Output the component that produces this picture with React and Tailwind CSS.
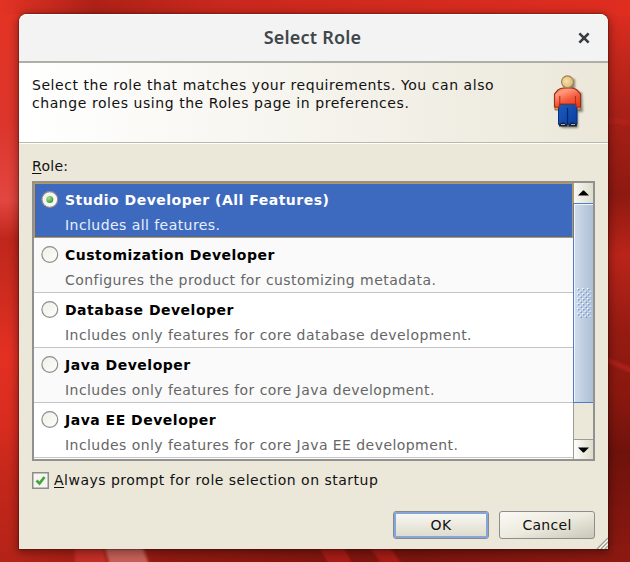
const roles = [
  { name: 'Studio Developer (All Features)', note: 'Includes all features.' },
  { name: 'Customization Developer', note: 'Configures the product for customizing metadata.' },
  { name: 'Database Developer', note: 'Includes only features for core database development.' },
  { name: 'Java Developer', note: 'Includes only features for core Java development.' },
  { name: 'Java EE Developer', note: 'Includes only features for core Java EE development.' },
];

function Radio({ checked }) {
  return (
    <svg width="18" height="18" viewBox="0 0 18 18" className="block shrink-0">
      <defs>
        <linearGradient id="radioFill" x1="0" y1="0" x2="1" y2="1">
          <stop offset="0" stopColor="#efeee6" />
          <stop offset="1" stopColor="#fefefc" />
        </linearGradient>
        <radialGradient id="radioDot" cx="0.35" cy="0.3" r="0.8">
          <stop offset="0" stopColor="#a9dc98" />
          <stop offset="1" stopColor="#2f962c" />
        </radialGradient>
      </defs>
      <circle cx="8.800" cy="8.500" r="7.900" fill="url(#radioFill)" stroke="#8c8e8c" strokeWidth="1.200" />
      {checked && <circle cx="8.800" cy="8.500" r="3.500" fill="url(#radioDot)" />}
    </svg>
  );
}

function Person() {
  return (
    <svg width="36" height="56" viewBox="0 0 36 56" className="block">
      <defs>
        <radialGradient id="head" cx="0.4" cy="0.45" r="0.7">
          <stop offset="0" stopColor="#f5e3b4" />
          <stop offset="1" stopColor="#d8ae64" />
        </radialGradient>
        <linearGradient id="shirt" x1="0.2" y1="0" x2="0.8" y2="1">
          <stop offset="0" stopColor="#ff7a58" />
          <stop offset="0.200" stopColor="#ff9a7c" />
          <stop offset="0.600" stopColor="#f4583a" />
          <stop offset="1" stopColor="#e8401e" />
        </linearGradient>
        <linearGradient id="jeans" x1="0" y1="0" x2="1" y2="1">
          <stop offset="0" stopColor="#1c5cc0" />
          <stop offset="1" stopColor="#0a3da0" />
        </linearGradient>
        <filter id="blur"><feGaussianBlur stdDeviation="1" /></filter>
      </defs>
      <path d="M15 5h10v11l7 3 1 19h-5v16H12l-2-2z" fill="#35352c" opacity="0.55" filter="url(#blur)" />
      <path d="M5 33h4v3H5z M26 33h4v3h-4z" fill="#dda15a" stroke="#9b6a35" />
      <path d="M8.500 30h18.500v20.500H8.500z" fill="url(#jeans)" stroke="#0a2f7c" />
      <path d="M17.500 34v16" stroke="#062661" strokeWidth="1.200" />
      <path d="M8 16c2-1.800 4-2 6-2h7c3 0 4 .5 6 2l3.500 4v13h-4.500v-3H9.500v3h-5V20z" fill="url(#shirt)" stroke="#9d3018" strokeWidth="1.200" />
      <path d="M9.800 22v8M25.500 22v8" fill="none" stroke="#b32c16" />
      <circle cx="17.500" cy="7.800" r="6" fill="url(#head)" stroke="#a4834e" strokeWidth="1.200" />
      <path d="M9 52.500c0-3 2-4 5-4l3.500 3v1zM18 52.500l3-4c3 0 6 1 6 4z" fill="#17202c" />
      <path d="M11 50.500h4M21 50.500h4" stroke="#a9afb9" strokeWidth="1.200" />
    </svg>
  );
}

function Row({ role, selected, odd }) {
  const ground = selected
    ? 'border border-[#c59644] bg-[#3d6abe] pl-[6px] pt-[5px]'
    : `border-b border-[#c4c4c4] pl-[7px] pt-1.5 ${odd ? 'bg-[#fafafa]' : 'bg-white'}`;
  return (
    <div className={`flex h-[55px] shrink-0 items-start gap-[6px] ${ground}`}>
      <div className="pt-0.5"><Radio checked={selected} /></div>
      <div className="whitespace-nowrap">
        <div className={`h-[25px] text-[14px] leading-[22px] font-bold tracking-[0.5px] ${selected ? 'text-white' : 'text-black'}`}>{role.name}</div>
        <div className={`text-[14px] leading-[22px] tracking-[0.44px] ${selected ? 'text-[#e8effb]' : 'text-[#666]'}`}>{role.note}</div>
      </div>
    </div>
  );
}

function ScrollBar() {
  return (
    <div className="flex w-5 shrink-0 flex-col">
      <div className="flex h-5 items-center justify-center border-l border-[#9c9c94] bg-gradient-to-r from-[#f8f8f4] to-[#dedccb]">
        <svg width="11" height="6" viewBox="0 0 11 6"><path d="M0 5.500 5 .5h1l5 5z" fill="#000" /></svg>
      </div>
      <div className="flex h-[200px] items-center justify-center border-y border-l border-[#4f7ccb] bg-gradient-to-r from-[#d0dced] to-[#aebfd4] shadow-[inset_1px_1px_0_#f0f5fc]">
        <svg width="14" height="30" viewBox="0 0 14 30">
          <defs>
            <pattern id="grip" width="5" height="5" patternUnits="userSpaceOnUse">
              <path d="M0 0h1.500v1.500H0zM2.500 2.500H4V4H2.500z" fill="#f3f8ff" />
              <path d="M1 1h1.500v1.500H1zM3.500 3.500H5V5H3.500z" fill="#7d9dd2" />
            </pattern>
          </defs>
          <rect width="14" height="30" fill="url(#grip)" />
        </svg>
      </div>
      <div className="grow border-l border-[#9c9c94] bg-[#ebe8da]" />
      <div className="flex h-5 items-center justify-center border-t border-l border-[#9c9c94] bg-gradient-to-r from-[#fdfdfb] to-[#dedccb]">
        <svg width="11" height="6" viewBox="0 0 11 6"><path d="M0 .5h11l-5 5H5z" fill="#000" /></svg>
      </div>
    </div>
  );
}

function Backdrop() {
  return (
    <svg className="absolute inset-0" width="630" height="562" viewBox="0 0 630 562">
      <defs>
        <linearGradient id="leftBand" x1="0" y1="0" x2="0" y2="1">
          <stop offset="0" stopColor="#e33325" /><stop offset="0.200" stopColor="#dc352b" />
          <stop offset="0.340" stopColor="#e24640" /><stop offset="0.410" stopColor="#c0261b" />
          <stop offset="0.480" stopColor="#c92a1e" /><stop offset="0.620" stopColor="#e33023" />
          <stop offset="0.750" stopColor="#d82c20" /><stop offset="0.850" stopColor="#c4271b" />
          <stop offset="1" stopColor="#b42318" />
        </linearGradient>
        <linearGradient id="rightBand" x1="0" y1="0" x2="0" y2="1">
          <stop offset="0" stopColor="#dc2d20" /><stop offset="0.080" stopColor="#c3271b" />
          <stop offset="0.200" stopColor="#a41f16" /><stop offset="0.330" stopColor="#8e1911" />
          <stop offset="0.440" stopColor="#ba2419" /><stop offset="0.580" stopColor="#951b12" />
          <stop offset="0.700" stopColor="#89180f" /><stop offset="0.800" stopColor="#70120c" />
          <stop offset="1" stopColor="#8c1911" />
        </linearGradient>
        <linearGradient id="bottomBand" x1="0" y1="0" x2="1" y2="0">
          <stop offset="0" stopColor="#b42318" /><stop offset="0.250" stopColor="#8f1a12" />
          <stop offset="0.450" stopColor="#85170f" /><stop offset="0.650" stopColor="#7c150e" />
          <stop offset="1" stopColor="#8c1911" />
        </linearGradient>
        <linearGradient id="topBand" x1="0" y1="0" x2="1" y2="0">
          <stop offset="0" stopColor="#e33325" /><stop offset="0.150" stopColor="#ae2117" />
          <stop offset="0.350" stopColor="#c9281d" /><stop offset="1" stopColor="#df2d20" />
        </linearGradient>
        <filter id="thin"><feGaussianBlur stdDeviation="1.500" /></filter>
      </defs>
      <rect width="630" height="562" fill="url(#topBand)" />
      <rect y="14" width="40" height="548" fill="url(#leftBand)" />
      <rect x="590" y="14" width="40" height="548" fill="url(#rightBand)" />
      <rect x="19" y="545" width="611" height="20" fill="url(#bottomBand)" />
      <path d="M600 119l40 5M600 357l40 17" stroke="#b3231a" strokeWidth="4" filter="url(#thin)" />
      <path d="M104 545h38l9 25h-40z" fill="#c66059" filter="url(#thin)" />
      <path d="M75 545h27l7 25H75z" fill="#c32e25" filter="url(#thin)" />
      <path d="M318 545h24l14 25h-24zM368 545h20l18 25h-20z" fill="#a81f16" filter="url(#thin)" />
    </svg>
  );
}

export default function App() {
  return (
    <div className="relative h-[562px] w-[630px] overflow-hidden pt-[14px] pl-[19px] font-['DejaVu_Sans',sans-serif] text-[14px] text-[#111]">
      <Backdrop />
      <div className="relative flex h-[535px] w-[589px] flex-col rounded-t-lg bg-[#ebe8da] shadow-[0_2px_8px_2px_rgba(0,0,0,0.35),0_0_1px_1px_rgba(60,10,5,0.3)]">
        <div className="grid h-[49px] shrink-0 grid-cols-[48px_1fr_48px] items-center rounded-t-lg border-t border-b-2 border-t-white border-b-[#b0afa7] bg-[#f3f3f3] text-[#41464a]">
          <span />
          <h1 className="-mt-0.5 -ml-0.5 text-center font-['Noto_Sans',sans-serif] text-[18px] leading-6 font-semibold tracking-[0.2px] whitespace-nowrap">Select Role</h1>
          <svg width="12" height="12" viewBox="0 0 12 12" className="ml-[18px]">
            <path d="M2.300 2.300l7.400 7.400M9.700 2.300l-7.400 7.400" stroke="#363b3e" strokeWidth="2.600" strokeLinecap="square" />
          </svg>
        </div>
        <div className="flex h-[80px] shrink-0 justify-between border-b border-[#b9b9a8] bg-gradient-to-r from-white to-[#ebe8da] pt-[13px] pr-[22px] pl-[13px] shadow-[0_1px_0_#fff]">
          <p className="leading-[18px] tracking-[0.56px] whitespace-nowrap">
            Select the role that matches your requirements. You can also<br />
            change roles using the Roles page in preferences.
          </p>
          <div className="-mt-0.5"><Person /></div>
        </div>
        <div className="px-[13px] pt-[13px]">
          <div className="h-[25px] leading-[20px] tracking-[0.3px]"><span className="underline underline-offset-2">R</span>ole:</div>
          <div className="flex h-[280px] w-[563px] overflow-hidden border-2 border-[#91918f] bg-white">
            <div className="flex grow flex-col">
              {roles.map((role, i) => <Row key={role.name} role={role} selected={i === 0} odd={i % 2 === 1} />)}
            </div>
            <ScrollBar />
          </div>
          <label className="mt-[9px] flex h-5 items-center gap-[5px]">
            <svg width="17" height="17" viewBox="0 0 17 17">
              <rect x="0.750" y="0.750" width="15.500" height="15.500" fill="#f6f5ef" stroke="#8c8e8c" strokeWidth="1.500" />
              <path d="M4.500 8.500l3 3L12.500 5" fill="none" stroke="#43a73d" strokeWidth="2.800" />
            </svg>
            <span className="tracking-[0.49px] whitespace-nowrap"><span className="underline underline-offset-2">A</span>lways prompt for role selection on startup</span>
          </label>
          <div className="mt-[21px] flex justify-end gap-[10px] tracking-[0.3px]">
            <button className="h-7 w-[96px] rounded-[3px] border border-[#858a91] bg-gradient-to-b from-[#faf9f5] to-[#dddaca] shadow-[inset_0_0_0_2px_#86a5d9]">OK</button>
            <button className="h-7 w-[96px] rounded-[3px] border border-[#8c8e8c] bg-gradient-to-br from-[#faf9f5] via-[#edebdf] to-[#cac7b7]">Cancel</button>
          </div>
        </div>
        <svg className="absolute right-0 bottom-0" width="12" height="12" viewBox="0 0 12 12">
          <path d="M1 12 12 1M5 12l7-7M9 12l3-3" stroke="#9c9a8e" strokeWidth="1.200" />
          <path d="M3 12l9-9M7 12l5-5" stroke="#fff" />
        </svg>
      </div>
    </div>
  );
}
